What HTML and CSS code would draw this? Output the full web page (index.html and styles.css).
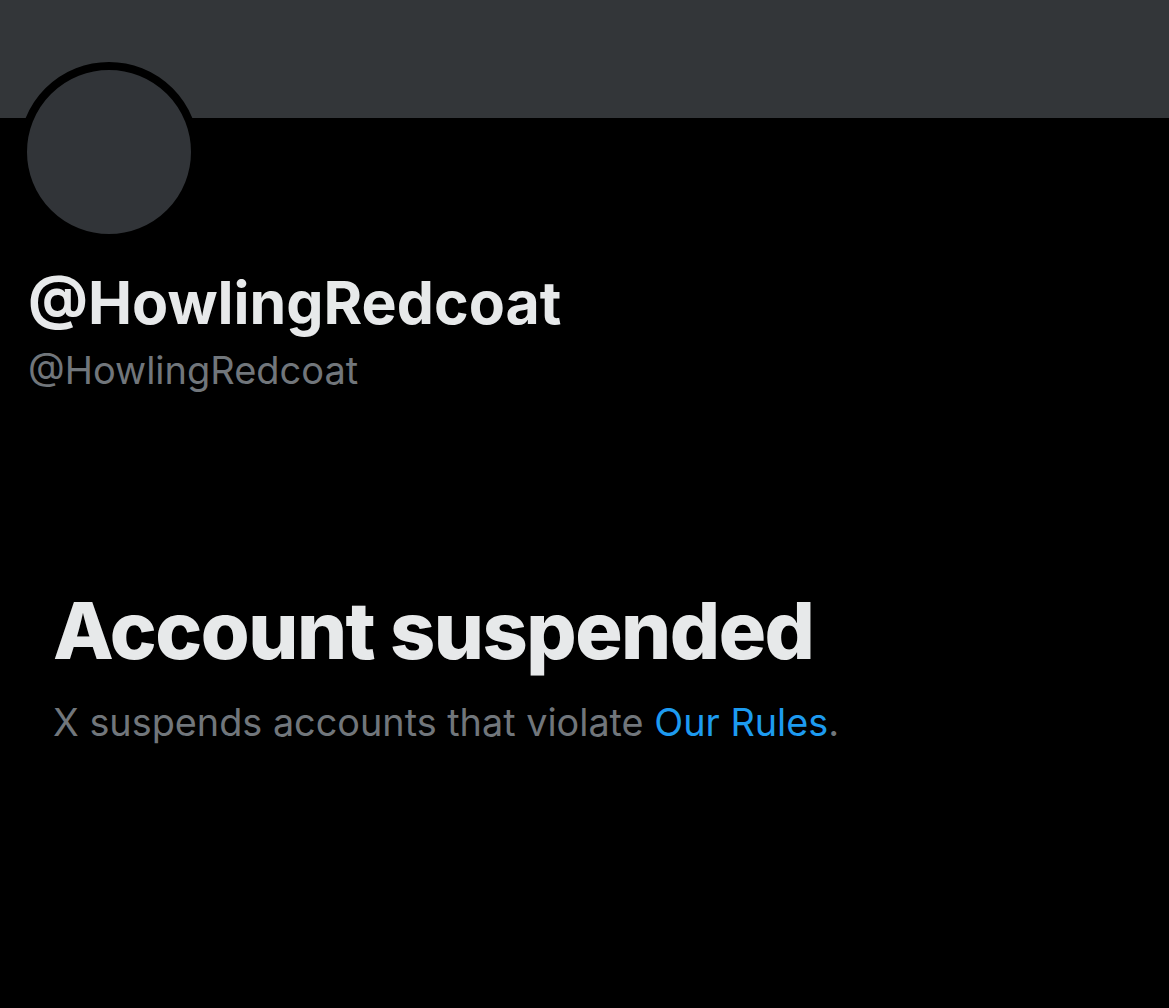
FILE: index.html
```html
<!DOCTYPE html>
<html>
<head>
<meta charset="utf-8">
<link rel="stylesheet" href="styles.css">
</head>
<body>
<div class="banner"></div>
<section class="profile">
  <div class="avatar"></div>
  <h1 class="name">@HowlingRedcoat</h1>
  <div class="handle">@HowlingRedcoat</div>
</section>
<section class="notice">
  <h2 class="title">Account suspended</h2>
  <p class="desc">X suspends accounts that violate <a class="link" href="#">Our Rules</a>.</p>
</section>
</body>
</html>
```
FILE: styles.css
```css
html, body {
  margin: 0;
  padding: 0;
  background: #000;
  height: 100%;
}
body {
  font-family: "Inter", "Liberation Sans", sans-serif;
  color: #e7e9ea;
  overflow: hidden;
}
.banner {
  height: 118px;
  background: #333639;
}
.profile {
  padding-left: 19px;
}
.avatar {
  width: 164px;
  height: 164px;
  margin-top: -56px;
  border-radius: 50%;
  background: #313438;
  border: 8px solid #000;
}
.name {
  margin: 28px 0 0 9px;
  font-size: 59px;
  font-weight: 700;
  line-height: 66px;
  letter-spacing: 0;
}
.handle {
  margin: 12px 0 0 9px;
  font-size: 38px;
  line-height: 44px;
  color: #71767b;
}
.notice {
  padding: 193px 0 0 53px;
}
.title {
  margin: 0;
  font-size: 79px;
  font-weight: 800;
  line-height: 90px;
  letter-spacing: -1.5px;
}
.desc {
  margin: 23px 0 0;
  font-size: 37.8px;
  line-height: 48px;
  color: #71767b;
}
.link {
  color: #1d9bf0;
  text-decoration: none;
}
```
